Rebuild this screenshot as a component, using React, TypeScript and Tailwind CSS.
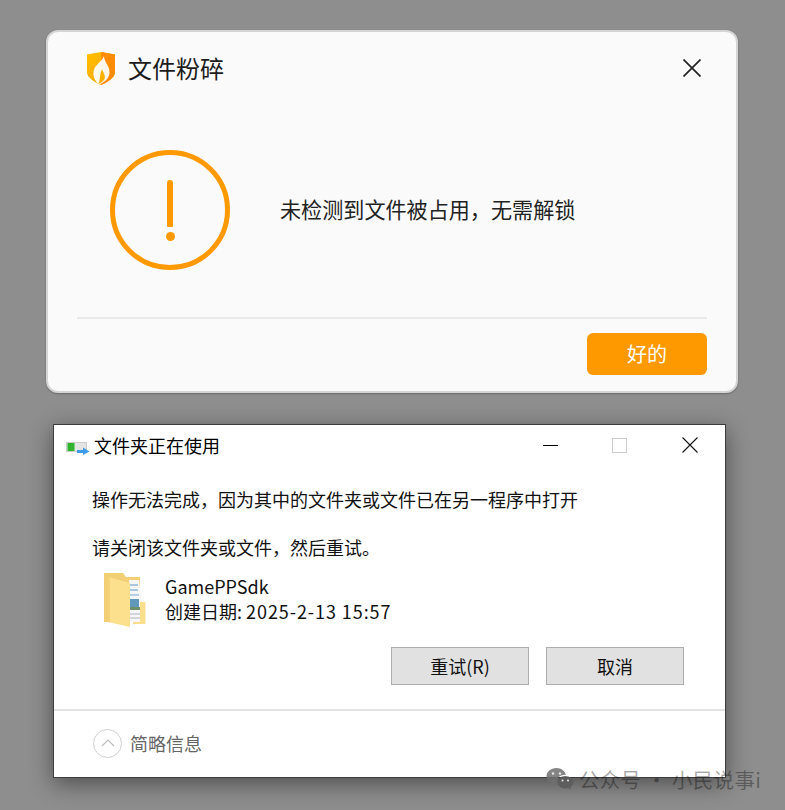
const cjk = { fontFamily: '"Noto Sans CJK SC", "Liberation Sans", sans-serif' };

function ShieldLogo() {
  return (
    <svg width="28" height="33" viewBox="0 0 28 33">
      <defs>
        <linearGradient id="shieldLeft" x1="0" y1="0" x2="0.6" y2="1">
          <stop offset="0" stopColor="#ffbe00" />
          <stop offset="1" stopColor="#ffab00" />
        </linearGradient>
      </defs>
      <path d="M14 0 L28 2.5 V20 C28 26 20 30.5 14 33 C8 30.5 0 26 0 20 V2.5 Z" fill="url(#shieldLeft)" />
      <path d="M14 0 L28 2.5 V20 C28 26 20 30.5 14 33 Z" fill="#ff8c00" />
      <path d="M17 4 C17 10 23 14 22.5 21 C22 27 17 30.5 12 32.5 C8 29 6 25 6.5 20 C7 13 14 11 17 4 Z" fill="#fff" opacity="0.92" />
      <path d="M15 17 C16 21 19 23 17.5 27 C16.5 29.5 13.5 31 11.5 32 C13.5 27 12.5 22 15 17 Z" fill="#ffb000" />
    </svg>
  );
}

function TransferIcon() {
  return (
    <svg width="24" height="20" viewBox="0 0 24 20">
      <rect x="0.5" y="7.5" width="20" height="9" fill="#e4e4e4" stroke="#cccccc" />
      <rect x="1.5" y="8" width="7" height="8" fill="#2fb52f" />
      <path d="M11 15 H17 V12.5 L23.5 16.5 L17 20 V18 H11 Z" fill="#3c9be8" />
    </svg>
  );
}

function FolderIcon() {
  return (
    <svg width="44" height="56" viewBox="0 0 44 56">
      <path d="M2 1 H21 L24 5 H38 V50 H2 Z" fill="#f2cf74" />
      <path d="M27 8 H37 L40 34 V50 H27 Z" fill="#f6f6f6" />
      <rect x="28" y="12" width="8" height="2" fill="#a9c8e0" />
      <rect x="28" y="17" width="8" height="2" fill="#a9c8e0" />
      <rect x="28" y="22" width="9" height="2" fill="#b6cfe3" />
      <rect x="28" y="27" width="9" height="8" fill="#5f98b8" />
      <rect x="28" y="35" width="10" height="3" fill="#6f8f6a" />
      <rect x="28" y="41" width="10" height="2" fill="#d2d6da" />
      <rect x="28" y="45" width="10" height="2" fill="#d2d6da" />
      <path d="M38 30 H43.5 V52 H31 V50 H38 Z" fill="#fadf8c" />
      <path d="M6 5 L28 11 V55 L6 50 Z" fill="#fde08e" />
      <path d="M6 5 L8 6 V50.5 L6 50 Z" fill="#f3d27a" />
    </svg>
  );
}

function WeChatIcon() {
  return (
    <svg width="28" height="24" viewBox="0 0 28 24">
      <path d="M10.5 1 C4.8 1 0.5 4.8 0.5 9.3 C0.5 11.9 2 14.1 4.2 15.6 L3.3 18.6 L6.8 16.8 C8 17.2 9.2 17.4 10.5 17.4 L11 17.4 C10.7 16.6 10.6 15.8 10.6 15 C10.6 11 14.3 7.8 19.2 7.8 L20 7.8 C18.9 3.9 15 1 10.5 1 Z" fill="#6f6f6f" fillOpacity="0.85" />
      <path d="M19.2 9 C14.9 9 11.6 11.8 11.6 15.2 C11.6 18.6 14.9 21.4 19.2 21.4 C20.2 21.4 21.1 21.2 22 20.9 L25 22.6 L24.2 19.9 C26.2 18.6 27.5 17 27.5 15.2 C27.5 11.8 23.5 9 19.2 9 Z" fill="#5c5c5c" fillOpacity="0.9" />
      <circle cx="7" cy="6.5" r="1.2" fill="#e8e8e8" />
      <circle cx="14" cy="6.5" r="1.2" fill="#e8e8e8" />
      <circle cx="16.5" cy="13.5" r="1" fill="#e8e8e8" />
      <circle cx="22" cy="13.5" r="1" fill="#e8e8e8" />
    </svg>
  );
}

function CleanDialog() {
  return (
    <div className="ml-[46px] flex h-[363px] w-[692px] flex-col rounded-[12px] border-2 border-[#d4d4d4] bg-[#fafafa] shadow-[0_1px_2px_rgba(0,0,0,0.25)]">
      <div className="flex h-[72px] items-center pl-[39px] pr-[35px]">
        <ShieldLogo />
        <span className="ml-[13px] flex-1 text-[24px] leading-none text-[#1c1c1c]">文件粉碎</span>
        <svg width="18" height="18" viewBox="0 0 18 18" stroke="#222" strokeWidth="1.7">
          <path d="M0.5 0.5 L17.5 17.5 M17.5 0.5 L0.5 17.5" />
        </svg>
      </div>
      <div className="flex h-[213px] items-center pb-[1px] pl-[62px]">
        <div className="flex h-[120px] w-[120px] flex-col items-center justify-center rounded-full border-[5px] border-[#ff9900]">
          <div className="h-[47px] w-[6px] rounded-t-[3px] rounded-b-[1px] bg-[#ff9900]" />
          <div className="mt-[5px] h-[9px] w-[9px] rounded-full bg-[#ff9900]" />
        </div>
        <span className="ml-[50px] text-[21.1px] leading-none text-[#222]">未检测到文件被占用，无需解锁</span>
      </div>
      <div className="mx-[29px] h-[2px] bg-[#e9e9e9]" />
      <div className="flex justify-end pr-[29px] pt-[14px]">
        <button className="h-[42px] w-[120px] rounded-[6px] bg-[#ff9900] text-[20px] text-white">好的</button>
      </div>
    </div>
  );
}

function FolderInUseDialog() {
  return (
    <div className="ml-[53px] mt-[31px] flex h-[354px] w-[673px] flex-col border border-[#3c3c3c] bg-white shadow-[0_6px_22px_rgba(0,0,0,0.45)]">
      <div className="flex h-[40px] items-center pl-[12px]">
        <TransferIcon />
        <span className="ml-[4px] flex-1 text-[18px] leading-none text-black">文件夹正在使用</span>
        <div className="h-[1px] w-[15px] bg-black" />
        <div className="ml-[54px] h-[15px] w-[15px] border border-[#cccccc]" />
        <svg className="ml-[55px] mr-[27px]" width="16" height="16" viewBox="0 0 16 16" stroke="#111" strokeWidth="1.1">
          <path d="M0.5 0.5 L15.5 15.5 M15.5 0.5 L0.5 15.5" />
        </svg>
      </div>
      <div className="flex-1 pl-[38px] pr-[41px] pt-[22px]">
        <p className="text-[18px] leading-[24px] text-[#111]">操作无法完成，因为其中的文件夹或文件已在另一程序中打开</p>
        <p className="mt-[24px] text-[18px] leading-[24px] text-[#111]">请关闭该文件夹或文件，然后重试。</p>
        <div className="mt-[13px] flex items-center pl-[10px]">
          <FolderIcon />
          <div className="ml-[19px] pb-[2px]">
            <p className="text-[18px] leading-[25px] text-[#111]">GamePPSdk</p>
            <p className="text-[18px] leading-[25px] text-[#111]">
              创建日期: <span className="tracking-[0.93px]">2025-2-13 15:57</span>
            </p>
          </div>
        </div>
        <div className="mt-[19px] flex justify-end gap-[17px]">
          <button className="h-[38px] w-[138px] border border-[#adadad] bg-[#e1e1e1] text-[18px] text-[#111]">重试(R)</button>
          <button className="h-[38px] w-[138px] border border-[#adadad] bg-[#e1e1e1] text-[18px] text-[#111]">取消</button>
        </div>
      </div>
      <div className="h-[2px] bg-[#e3e3e3]" />
      <div className="flex h-[66px] items-center pb-[2px] pl-[39px]">
        <div className="flex h-[29px] w-[29px] items-center justify-center rounded-full border border-[#cfcfcf]">
          <svg width="14" height="8" viewBox="0 0 14 8" fill="none" stroke="#bdbdbd" strokeWidth="1.2">
            <path d="M1 7 L7 1 L13 7" />
          </svg>
        </div>
        <span className="ml-[8px] text-[18px] leading-none text-[#666]">简略信息</span>
      </div>
    </div>
  );
}

export default function App() {
  return (
    <div className="relative h-[810px] w-[785px] overflow-hidden bg-[#8e8e8e] pt-[30px]" style={cjk}>
      <CleanDialog />
      <FolderInUseDialog />
      {/* watermark sits over the lower dialog edge */}
      <div className="absolute left-[546px] top-[766px] flex items-center">
        <WeChatIcon />
        <span className="ml-[5px] whitespace-nowrap text-[20.5px] leading-[26px] tracking-[0.3px] text-black/35">公众号 · 小民说事i</span>
      </div>
    </div>
  );
}
